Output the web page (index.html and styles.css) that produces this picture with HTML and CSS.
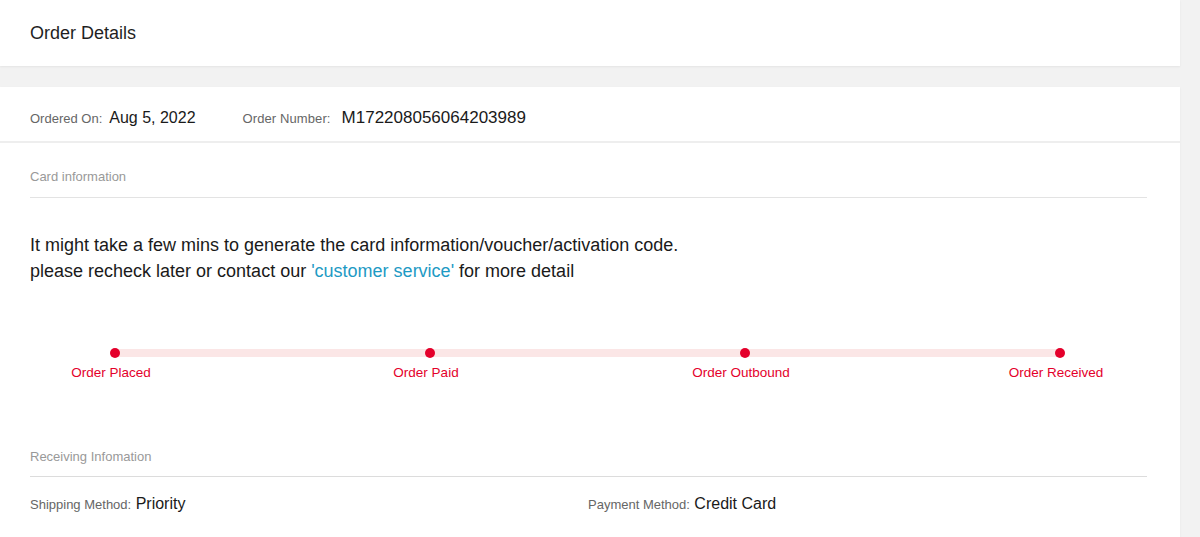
FILE: index.html
```html
<!DOCTYPE html>
<html>
<head>
<meta charset="utf-8">
<link rel="stylesheet" href="styles.css">
</head>
<body>
<div class="page">
  <header class="card head">
    <h1 class="title">Order Details</h1>
  </header>
  <section class="card main">
    <div class="meta">
      <span class="meta-item"><span class="lbl">Ordered On:</span><span class="val">Aug 5, 2022</span></span>
      <span class="meta-item"><span class="lbl">Order Number:</span><span class="val num">M172208056064203989</span></span>
    </div>
    <div class="body">
      <div class="sec-title">Card information</div>
      <p class="notice">It might take a few mins to generate the card information/voucher/activation code.<br>please recheck later or contact our <a class="link" href="#">'customer service'</a> for more detail</p>
      <div class="steps">
        <div class="step"><span class="dot"></span><span class="step-lbl">Order Placed</span></div>
        <div class="step"><span class="dot"></span><span class="step-lbl">Order Paid</span></div>
        <div class="step"><span class="dot"></span><span class="step-lbl">Order Outbound</span></div>
        <div class="step"><span class="dot"></span><span class="step-lbl">Order Received</span></div>
      </div>
      <div class="sec-title recv">Receiving Infomation</div>
      <div class="info-row">
        <div class="info"><span class="lbl">Shipping Method:</span> <span class="val">Priority</span></div>
        <div class="info"><span class="lbl">Payment Method:</span> <span class="val">Credit Card</span></div>
      </div>
    </div>
  </section>
</div>
</body>
</html>
```

FILE: styles.css
```css
* { box-sizing: border-box; }
html, body { margin: 0; padding: 0; }
body {
  background: #f2f2f2;
  font-family: "Liberation Sans", Arial, sans-serif;
  color: #1a1a1a;
  height: 537px;
  overflow: hidden;
}
.page {
  width: 1180px;
  display: flex;
  flex-direction: column;
  gap: 21px;
}
.card {
  background: #fff;
  box-shadow: 0 1px 2px rgba(0,0,0,0.06);
}
.head {
  height: 66px;
  padding: 0 30px;
  display: flex;
  align-items: center;
}
.title {
  margin: 0;
  font-size: 18px;
  font-weight: normal;
  color: #1f1f1f;
}
.main {
  min-height: 460px;
}
.meta {
  height: 56px;
  border-bottom: 2px solid #eeeeee;
  display: flex;
  align-items: center;
  padding: 7px 30px 0;
  gap: 47px;
}
.meta-item { display: flex; align-items: baseline; }
.lbl { font-size: 13px; color: #666; }
.meta .lbl { margin-right: 7px; }
.meta .meta-item + .meta-item .lbl { margin-right: 11px; letter-spacing: 0.1px; }
.val { font-size: 16px; color: #1a1a1a; }
.num { font-size: 17px; }
.body { padding: 0 33px 0 30px; }
.sec-title {
  font-size: 13px;
  color: #999;
  padding: 26px 0 13px;
  border-bottom: 1px solid #e3e3e3;
}
.notice {
  margin: 34px 0 0;
  font-size: 18px;
  line-height: 26px;
  color: #1a1a1a;
}
.link { color: #1d9ac4; text-decoration: none; }
.steps {
  position: relative;
  display: flex;
  justify-content: space-between;
  margin-top: 64px;
  width: 1115px;
}
.steps::before {
  content: "";
  position: absolute;
  left: 85px;
  right: 85px;
  top: 1px;
  height: 8px;
  background: #fbe6e6;
}
.step {
  width: 170px;
  display: flex;
  flex-direction: column;
  align-items: center;
  position: relative;
}
.dot {
  width: 10px;
  height: 10px;
  border-radius: 50%;
  background: #e4002b;
}
.step-lbl {
  margin-top: 7px;
  margin-right: 8px;
  font-size: 13.5px;
  color: #e4002b;
}
.recv { padding-top: 69px; padding-bottom: 12px; border-bottom-color: #dcdcdc; }
.info-row {
  display: flex;
  padding-top: 18px;
}
.info { width: 558px; }
.info .lbl { font-size: 13px; color: #666; }
.info .val { font-size: 16px; }
```
